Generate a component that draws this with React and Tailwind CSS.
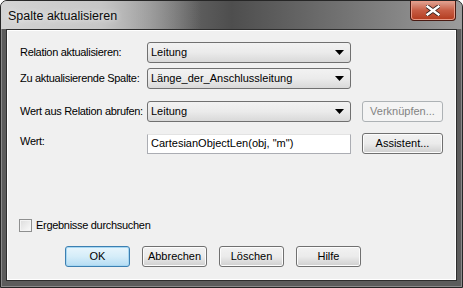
import React from "react";

const font = { fontFamily: '"Liberation Sans", Arial, sans-serif' };

const Arrow = () => (
  <svg width="9" height="5" viewBox="0 0 9 5" className="shrink-0">
    <path d="M0 0h9L4.5 5z" fill="#000" />
  </svg>
);

const Dropdown = ({ value }) => (
  <div className="flex items-center justify-between h-[21px] w-[204px] pl-[3px] pr-[6px] rounded-[3px] border border-[#707070] bg-gradient-to-b from-[#f2f2f2] via-[#ebebeb] to-[#d9d9d9] text-[11px] text-black">
    <span className="whitespace-nowrap">{value}</span>
    <Arrow />
  </div>
);

const Button = ({ children, primary, disabled, className = "" }) => {
  const look = primary
    ? "border-[#3c7fb1] bg-gradient-to-b from-[#e8f5fc] via-[#d5edf9] to-[#b5dcf3] shadow-[inset_0_0_0_1px_#a6d7f2]"
    : disabled
    ? "border-[#adb2b5] bg-[#f4f4f4] text-[#838383]"
    : "border-[#707070] bg-gradient-to-b from-[#f2f2f2] via-[#ebebeb] to-[#cfcfcf] shadow-[inset_0_0_0_1px_#fcfcfc]";
  return (
    <div
      className={`flex items-center justify-center h-[21px] rounded-[3px] border text-[11px] whitespace-nowrap ${look} ${className}`}
    >
      {children}
    </div>
  );
};

const Label = ({ children, className = "" }) => (
  <span className={`whitespace-nowrap tracking-[-0.3px] ${className}`}>{children}</span>
);

export default function App() {
  return (
    <div style={font} className="w-[463px] h-[288px] bg-white overflow-hidden">
      <div className="relative w-[463px] h-[288px] flex flex-col rounded-t-[7px] border border-[#262626] bg-[#5c5c5c] shadow-[inset_0_0_0_1px_#8a8a8a] px-[5px] pb-[6px]">
        {/* title bar */}
        <div className="relative h-[28px] flex items-start shrink-0 mx-[-5px] px-[5px] rounded-t-[6px] bg-gradient-to-r from-[#bdbdbd] via-[#4e4e4e] to-[#9c9c9c]">
          <div className="absolute left-0 top-0 w-[200px] h-[28px] bg-gradient-to-r from-[#d4d4d4] via-[#c6c6c6] to-transparent rounded-tl-[6px]" />
          <span className="relative mt-[6px] ml-[2px] text-[12.5px] text-[#0a0a0a] [text-shadow:0_0_6px_#ffffff]">
            Spalte aktualisieren
          </span>
          <div className="relative ml-auto mr-[1px] w-[46px] h-[20px] flex items-center justify-center rounded-b-[4px] border border-[#4a1a12] border-t-0 bg-gradient-to-b from-[#e0a595] via-[#c75c43] to-[#b23a1c] shadow-[inset_0_0_0_1px_#e99a86]">
            <svg width="14" height="11" viewBox="0 0 14 11">
              <path
                d="M1.5 1.5l11 8M12.5 1.5l-11 8"
                stroke="#2b1a18"
                strokeWidth="4"
                strokeLinecap="square"
              />
              <path
                d="M1.5 1.5l11 8M12.5 1.5l-11 8"
                stroke="#ffffff"
                strokeWidth="2.4"
                strokeLinecap="square"
              />
            </svg>
          </div>
        </div>

        {/* client area */}
        <div className="flex-1 min-h-0 flex flex-col border border-[#2e2e2e] bg-[#f0f0f0] shadow-[inset_0_0_0_1px_#ffffff] pl-[13px] text-[11px] leading-[13px] text-black">
          <div className="grid grid-cols-[127px_204px_11px_81px] items-center mt-[12px]">
            <Label>Relation aktualisieren:</Label>
            <Dropdown value="Leitung" />
            <span />
            <span />
          </div>
          <div className="grid grid-cols-[127px_204px_11px_81px] items-center mt-[5px]">
            <Label>Zu aktualisierende Spalte:</Label>
            <Dropdown value="Länge_der_Anschlussleitung" />
            <span />
            <span />
          </div>
          <div className="grid grid-cols-[127px_204px_11px_81px] items-center mt-[12px]">
            <Label>Wert aus Relation abrufen:</Label>
            <Dropdown value="Leitung" />
            <span />
            <Button disabled>Verknüpfen...</Button>
          </div>
          <div className="grid grid-cols-[127px_204px_11px_81px] items-center mt-[11px]">
            <Label className="self-start mt-[2px]">Wert:</Label>
            <div className="h-[20px] flex items-center px-[3px] border border-[#abadb3] border-t-[#e3e3e3] bg-white whitespace-nowrap">
              CartesianObjectLen(obj, &quot;m&quot;)
            </div>
            <span />
            <Button>Assistent...</Button>
          </div>

          <div className="flex items-center gap-[4px] mt-[65px] ml-[-1px]">
            <div className="w-[13px] h-[13px] border border-[#8e8f8f] bg-gradient-to-br from-[#dcdcdc] to-[#fbfbfb] shadow-[inset_0_0_0_1px_#f4f4f4]" />
            <Label>Ergebnisse durchsuchen</Label>
          </div>

          <div className="flex items-center mt-[14px] ml-[45px] gap-[12px]">
            <Button primary className="w-[65px]">
              OK
            </Button>
            <Button className="w-[65px]">Abbrechen</Button>
            <Button className="w-[65px]">Löschen</Button>
            <Button className="w-[65px]">Hilfe</Button>
          </div>
        </div>
      </div>
    </div>
  );
}
